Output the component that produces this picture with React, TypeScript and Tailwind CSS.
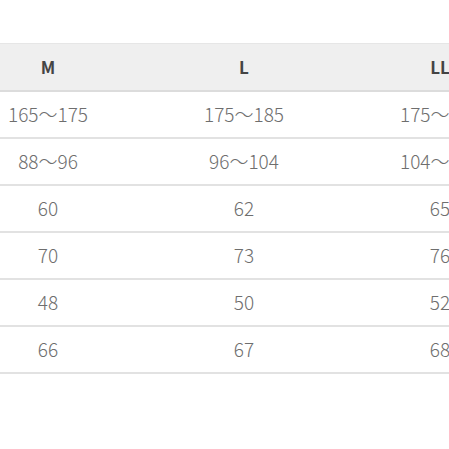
import React from "react";

const header = ["M", "L", "LL"];
const rows = [
  ["165～175", "175～185", "175～185"],
  ["88～96", "96～104", "104～112"],
  ["60", "62", "65"],
  ["70", "73", "76"],
  ["48", "50", "52"],
  ["66", "67", "68"],
];

export default function App() {
  return (
    <div className="w-[449px] h-[449px] overflow-hidden bg-white" style={{ fontFamily: '"Noto Sans CJK JP", "Noto Sans", sans-serif' }}>
      <div className="pt-[43px] ml-[-50px] w-[588px]">
        <div className="flex h-[49px] bg-[#efefef] border-t border-t-[#e6e6e6] border-b-2 border-b-[#dcdcdc]">
          {header.map((h) => (
            <div key={h} className="w-[196px] flex items-center justify-center text-[17px] font-bold text-[#444]">
              {h}
            </div>
          ))}
        </div>
        {rows.map((r, i) => (
          <div key={i} className="flex h-[47px] border-b-2 border-b-[#e2e2e2]">
            {r.map((c, j) => (
              <div key={j} className="w-[196px] flex items-center justify-center text-[19px] font-light text-[#6e6e6e]">
                {c}
              </div>
            ))}
          </div>
        ))}
      </div>
    </div>
  );
}
